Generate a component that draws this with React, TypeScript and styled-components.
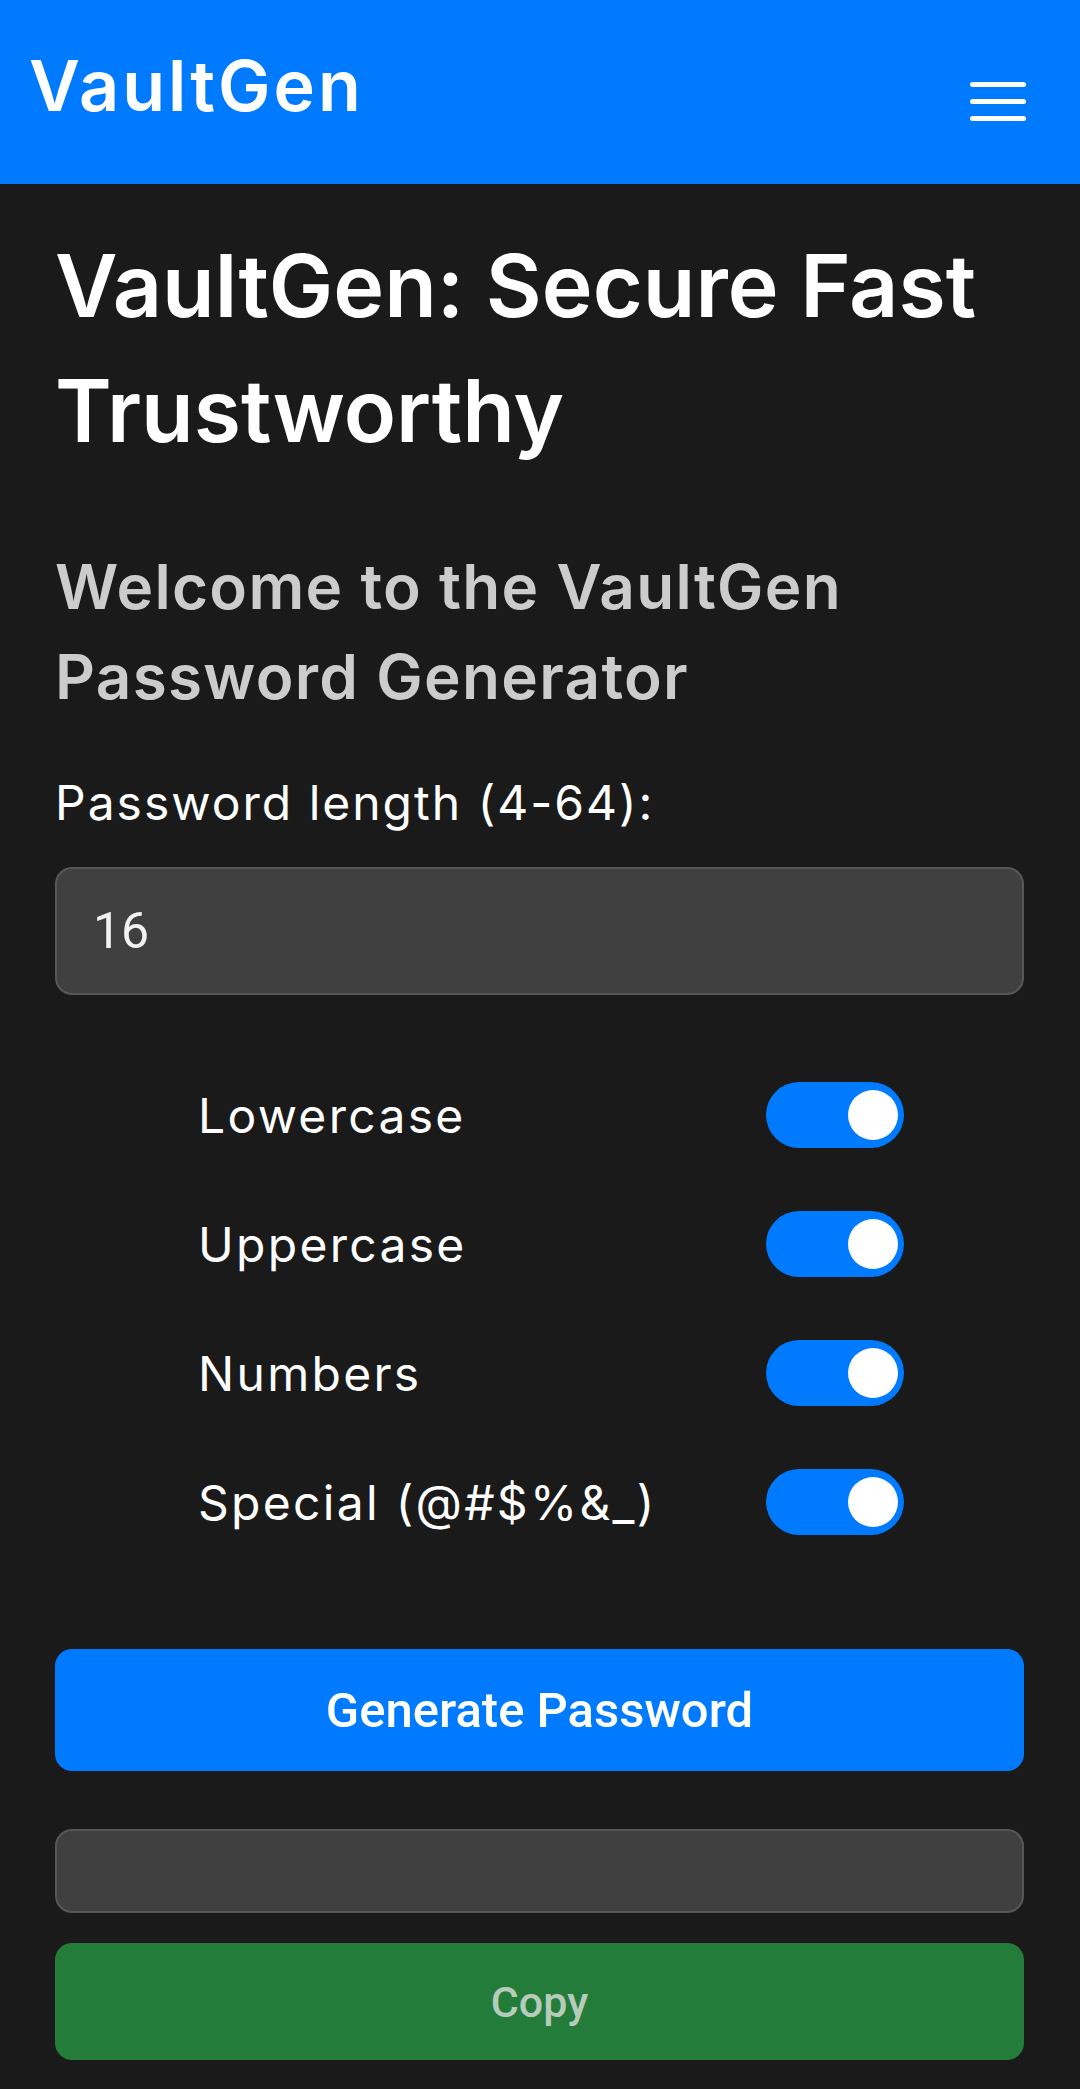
import { useState } from "react";
import styled, { createGlobalStyle } from "styled-components";

const GlobalStyle = createGlobalStyle`
  body {
    margin: 0;
    background: #1a1a1a;
    font-family: Inter, "Noto Sans", sans-serif;
  }
`;

const Page = styled.div`
  min-height: 100vh;
  background: #1a1a1a;
  color: #fff;
`;

const Header = styled.header`
  display: flex;
  justify-content: space-between;
  align-items: flex-start;
  height: 184px;
  padding: 0 54px 0 29px;
  background: #007bff;
  box-sizing: border-box;
`;

const Logo = styled.div`
  margin-top: 46px;
  font-size: 70px;
  font-weight: 600;
  line-height: 80px;
  letter-spacing: 3px;
  color: #fff;
`;

const MenuButton = styled.button`
  display: flex;
  flex-direction: column;
  gap: 12px;
  margin-top: 82px;
  padding: 0;
  border: none;
  background: none;
`;

const MenuBar = styled.span`
  display: block;
  width: 56px;
  height: 5px;
  border-radius: 3px;
  background: #fff;
`;

const Main = styled.main`
  display: flex;
  flex-direction: column;
  padding: 40px 56px 31px 55px;
`;

const Title = styled.h1`
  margin: 0;
  font-size: 86px;
  font-weight: 600;
  line-height: 125px;
  color: #fff;
`;

const Subtitle = styled.h2`
  margin: 68px 0 0;
  font-size: 62px;
  font-weight: 600;
  line-height: 90px;
  letter-spacing: 1.3px;
  color: #cccccc;
`;

const FieldLabel = styled.label`
  margin-top: 46px;
  font-size: 48px;
  font-weight: 400;
  line-height: 69px;
  letter-spacing: 2px;
`;

const TextBox = styled.input<{ $tall?: boolean }>`
  box-sizing: border-box;
  width: 100%;
  height: ${(p) => (p.$tall ? "128px" : "84px")};
  padding: 0 36px;
  border: 2px solid #575757;
  border-radius: 17px;
  background: #404040;
  color: #f2f2f2;
  font-family: Roboto, sans-serif;
  font-size: 50px;
  outline: none;
`;

const Options = styled.div`
  display: flex;
  flex-direction: column;
  gap: 63px;
  width: 706px;
  margin: 87px 0 0 143px;
`;

const OptionRow = styled.div`
  display: flex;
  justify-content: space-between;
  align-items: center;
  height: 66px;
  font-size: 48px;
  letter-spacing: 2.3px;
`;

const Toggle = styled.button<{ $on: boolean }>`
  display: flex;
  align-items: center;
  justify-content: ${(p) => (p.$on ? "flex-end" : "flex-start")};
  width: 138px;
  height: 66px;
  padding: 0 6px 0 8px;
  border: none;
  border-radius: 33px;
  background: ${(p) => (p.$on ? "#007bff" : "#555")};
  box-sizing: border-box;
`;

const Knob = styled.span`
  width: 50px;
  height: 50px;
  border-radius: 50%;
  background: #fff;
`;

const ActionButton = styled.button<{ $variant: "primary" | "copy" }>`
  width: 100%;
  height: ${(p) => (p.$variant === "primary" ? "122px" : "117px")};
  margin-top: ${(p) => (p.$variant === "primary" ? "114px" : "30px")};
  border: none;
  border-radius: 17px;
  background: ${(p) => (p.$variant === "primary" ? "#007bff" : "#237c3a")};
  color: ${(p) => (p.$variant === "primary" ? "#fff" : "#b6cbbb")};
  font-family: Roboto, sans-serif;
  font-size: ${(p) => (p.$variant === "primary" ? "49px" : "43px")};
  font-weight: 500;
`;

const OutputWrap = styled.div`
  margin-top: 58px;
`;

const options = [
  { key: "lower", label: "Lowercase" },
  { key: "upper", label: "Uppercase" },
  { key: "numbers", label: "Numbers" },
  { key: "special", label: "Special (@#$%&_)" },
];

const App = () => {
  const [length, setLength] = useState("16");
  const [enabled, setEnabled] = useState<Record<string, boolean>>({
    lower: true,
    upper: true,
    numbers: true,
    special: true,
  });

  return (
    <Page>
      <GlobalStyle />
      <Header>
        <Logo>VaultGen</Logo>
        <MenuButton aria-label="menu">
          <MenuBar />
          <MenuBar />
          <MenuBar />
        </MenuButton>
      </Header>
      <Main>
        <Title>VaultGen: Secure Fast Trustworthy</Title>
        <Subtitle>Welcome to the VaultGen Password Generator</Subtitle>
        <FieldLabel htmlFor="len">Password length (4-64):</FieldLabel>
        <div style={{ marginTop: 30 }}>
          <TextBox
            id="len"
            $tall
            value={length}
            onChange={(e) => setLength(e.target.value)}
          />
        </div>
        <Options>
          {options.map((o) => (
            <OptionRow key={o.key}>
              <span>{o.label}</span>
              <Toggle
                $on={enabled[o.key]}
                onClick={() =>
                  setEnabled({ ...enabled, [o.key]: !enabled[o.key] })
                }
              >
                <Knob />
              </Toggle>
            </OptionRow>
          ))}
        </Options>
        <ActionButton $variant="primary">Generate Password</ActionButton>
        <OutputWrap>
          <TextBox readOnly value="" />
        </OutputWrap>
        <ActionButton $variant="copy">Copy</ActionButton>
      </Main>
    </Page>
  );
};

export default App;
